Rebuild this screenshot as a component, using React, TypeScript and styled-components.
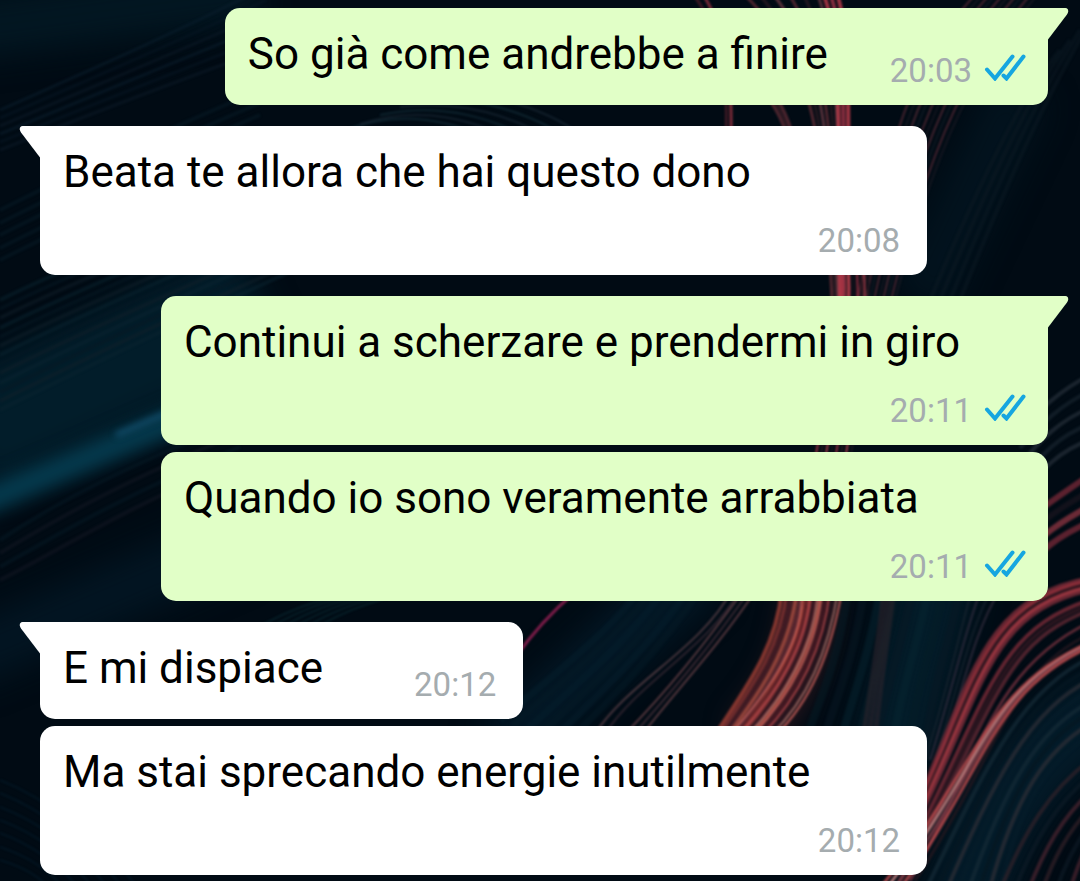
import React from "react";
import styled, { createGlobalStyle } from "styled-components";

const GlobalStyle = createGlobalStyle`
  *, *::before, *::after { box-sizing: border-box; }
  body {
    margin: 0;
    background: #010b14;
    font-family: Roboto, "Noto Sans", sans-serif;
  }
`;

/* ---------- Wallpaper ---------- */

type Curve = [number, number, number, number, number, number, number, number];

interface Bundle {
  from: Curve;
  to: Curve;
  count: number;
  colors: string[];
  width: number;
  opacity: number;
}

const bundles: Bundle[] = [
  // faint teal threads, left side
  { from: [0, 110, 90, 70, 160, 40, 260, -10], to: [0, 150, 100, 110, 180, 80, 290, 40], count: 6, colors: ["#0b2030", "#071825", "#0e1c29"], width: 3, opacity: 0.5 },
  { from: [0, 210, 60, 180, 120, 150, 260, 90], to: [0, 260, 60, 230, 120, 200, 260, 140], count: 5, colors: ["#071c28"], width: 4, opacity: 0.5 },
  { from: [0, 300, 60, 270, 160, 230, 360, 150], to: [0, 410, 60, 380, 160, 330, 360, 240], count: 13, colors: ["#0a2430", "#051824", "#101f29"], width: 4, opacity: 0.5 },
  { from: [0, 540, 60, 500, 120, 470, 240, 420], to: [0, 580, 60, 550, 120, 510, 240, 460], count: 4, colors: ["#061a26", "#141824"], width: 4, opacity: 0.5 },
  { from: [0, 780, 50, 800, 100, 840, 140, 890], to: [0, 860, 20, 866, 40, 876, 50, 890], count: 7, colors: ["#051e2e"], width: 2, opacity: 0.5 },
  { from: [240, 640, 280, 610, 320, 600, 360, 590], to: [300, 640, 330, 615, 370, 600, 420, 590], count: 6, colors: ["#0a2a32"], width: 2, opacity: 0.6 },
  { from: [340, 132, 400, 108, 450, 118, 520, 150], to: [440, 90, 500, 94, 560, 112, 600, 150], count: 6, colors: ["#122c38", "#182633"], width: 2, opacity: 0.7 },
  // deep blue streaks between the lower bubbles
  { from: [500, 720, 560, 670, 610, 630, 640, 590], to: [560, 750, 610, 700, 660, 650, 700, 590], count: 6, colors: ["#041e2c", "#041a25"], width: 7, opacity: 0.5 },
  { from: [805, 740, 825, 690, 840, 650, 848, 590], to: [925, 760, 930, 690, 950, 640, 960, 590], count: 8, colors: ["#041b26", "#081723", "#052430"], width: 8, opacity: 0.5 },
  { from: [862, 745, 870, 690, 878, 650, 884, 590], to: [874, 745, 880, 690, 886, 650, 894, 590], count: 3, colors: ["#33252e"], width: 5, opacity: 0.5 },
  // thin copper threads
  { from: [594, 735, 630, 680, 700, 650, 732, 590], to: [604, 735, 640, 680, 706, 650, 740, 590], count: 2, colors: ["#63444c", "#3c2b36"], width: 2, opacity: 0.7 },
  { from: [624, 735, 668, 690, 700, 650, 744, 590], to: [642, 735, 672, 695, 716, 650, 756, 590], count: 3, colors: ["#75494f", "#4a323c"], width: 2, opacity: 0.7 },
  // upper red strands
  { from: [690, -10, 722, 30, 728, 80, 726, 135], to: [700, -10, 728, 30, 732, 80, 731, 135], count: 2, colors: ["#4c1c28", "#a23644"], width: 3, opacity: 0.75 },
  { from: [740, 60, 765, 95, 780, 108, 788, 140], to: [752, 60, 775, 95, 786, 108, 794, 140], count: 3, colors: ["#6d303a", "#3c2028"], width: 3, opacity: 0.7 },
  { from: [740, -10, 800, 50, 822, 90, 832, 300], to: [816, -10, 836, 40, 836, 90, 846, 300], count: 6, colors: ["#6f3039", "#2f1c24", "#79404a"], width: 3, opacity: 0.7 },
  { from: [822, -10, 842, 40, 838, 90, 840, 300], to: [836, -10, 852, 40, 848, 90, 848, 300], count: 3, colors: ["#c23d4c", "#a63648"], width: 4, opacity: 0.8 },
  { from: [980, -10, 930, 40, 890, 110, 858, 300], to: [1050, -20, 1000, 40, 950, 90, 895, 300], count: 10, colors: ["#6d303e", "#1f1c26", "#6a3440", "#16202a"], width: 2, opacity: 0.6 },
  { from: [1060, 50, 1040, 75, 1010, 110, 930, 300], to: [1090, 20, 1070, 60, 1040, 100, 960, 300], count: 4, colors: ["#0b1a24"], width: 4, opacity: 0.5 },
  { from: [842, 270, 846, 340, 825, 400, 815, 460], to: [868, 270, 872, 340, 860, 400, 850, 460], count: 8, colors: ["#b03547", "#2f1a22", "#c04450", "#1c161e"], width: 2, opacity: 0.8 },
  // central flame
  { from: [782, 590, 776, 650, 744, 690, 715, 735], to: [822, 590, 812, 650, 784, 700, 750, 735], count: 9, colors: ["#d2503f", "#a83d3b", "#5a222c", "#d8604e", "#70303a"], width: 4, opacity: 0.6 },
  { from: [802, 590, 804, 640, 770, 690, 730, 735], to: [842, 590, 832, 650, 812, 700, 776, 735], count: 11, colors: ["#c8605a", "#4a1824", "#b0444a", "#26141e", "#a06a64"], width: 2, opacity: 0.85 },
  // outer arcs, right edge
  { from: [1020, 430, 1040, 410, 1060, 390, 1090, 375], to: [1020, 500, 1040, 470, 1060, 450, 1090, 440], count: 5, colors: ["#202a34", "#14212b"], width: 4, opacity: 0.8 },
  { from: [1020, 525, 1045, 505, 1060, 495, 1090, 475], to: [1020, 575, 1040, 550, 1060, 535, 1090, 522], count: 4, colors: ["#7a2a38", "#18141d", "#8f3542"], width: 6, opacity: 0.75 },
  { from: [925, 760, 950, 680, 960, 630, 972, 590], to: [940, 760, 965, 680, 975, 630, 1000, 590], count: 4, colors: ["#1c2834", "#43364a"], width: 2, opacity: 0.6 },
  { from: [900, 840, 970, 700, 970, 600, 1090, 578], to: [900, 856, 985, 700, 980, 615, 1090, 590], count: 5, colors: ["#7c2c38", "#a53440", "#30161f", "#b83e49"], width: 4, opacity: 0.8 },
  { from: [900, 868, 990, 700, 992, 632, 1090, 600], to: [900, 881, 1000, 700, 1000, 645, 1090, 610], count: 3, colors: ["#8a2f3c", "#3a1a24", "#6d2c38"], width: 4, opacity: 0.7 },
  { from: [910, 881, 980, 760, 990, 670, 1090, 622], to: [915, 881, 1000, 750, 1010, 670, 1090, 634], count: 2, colors: ["#70303c", "#24181f"], width: 3, opacity: 0.8 },
  { from: [870, 900, 980, 770, 980, 690, 1090, 642], to: [892, 900, 988, 770, 990, 692, 1090, 647], count: 4, colors: ["#b84a4c", "#c88482", "#7a3c46"], width: 3, opacity: 0.85 },
  { from: [925, 891, 985, 770, 1020, 690, 1090, 658], to: [1000, 891, 1020, 800, 1050, 760, 1090, 735], count: 8, colors: ["#142a35", "#061722", "#2c2e36", "#051c2a"], width: 4, opacity: 0.75 },
  { from: [1000, 891, 1025, 830, 1050, 790, 1090, 760], to: [1070, 891, 1074, 875, 1080, 860, 1090, 840], count: 6, colors: ["#3c242c", "#0f1d28", "#5a2a36"], width: 4, opacity: 0.6 },
];

const strands = bundles.flatMap((bundle, b) =>
  Array.from({ length: bundle.count }, (_, i) => {
    const t = i / (bundle.count - 1);
    const p = bundle.from.map((v, k) => Math.round(v + (bundle.to[k] - v) * t));
    return {
      key: `${b}-${i}`,
      d: `M${p[0]} ${p[1]}C${p[2]} ${p[3]} ${p[4]} ${p[5]} ${p[6]} ${p[7]}`,
      color: bundle.colors[i % bundle.colors.length],
      width: bundle.width,
      opacity: bundle.opacity,
    };
  })
);

const WallpaperSvg = styled.svg`
  position: fixed;
  inset: 0;
  z-index: -1;
  width: 100%;
  height: 100%;
`;

const Wallpaper = () => (
  <WallpaperSvg viewBox="0 0 1080 881" preserveAspectRatio="xMidYMid slice" aria-hidden="true">
    <defs>
      <filter id="haze" filterUnits="userSpaceOnUse" x="-100" y="-100" width="1280" height="1081" colorInterpolationFilters="sRGB">
        <feGaussianBlur stdDeviation="16" />
      </filter>
      <filter id="glow" filterUnits="userSpaceOnUse" x="-100" y="300" width="500" height="300" colorInterpolationFilters="sRGB">
        <feGaussianBlur stdDeviation="9" />
      </filter>
      <filter id="glint" filterUnits="userSpaceOnUse" x="0" y="350" width="300" height="150" colorInterpolationFilters="sRGB">
        <feGaussianBlur stdDeviation="3" />
      </filter>
      <filter id="soft" filterUnits="userSpaceOnUse" x="-20" y="-20" width="1120" height="921" colorInterpolationFilters="sRGB">
        <feGaussianBlur stdDeviation="1" />
      </filter>
    </defs>
    <rect width="1080" height="881" fill="#010b14" />
    <g filter="url(#haze)" fill="none">
      <path d="M-40 30L260 -10" stroke="#021722" strokeWidth="60" />
      <path d="M-40 440L260 300" stroke="#021d2a" strokeWidth="120" />
      <path d="M-40 660L240 540" stroke="#021522" strokeWidth="60" />
      <path d="M500 750L700 570" stroke="#031826" strokeWidth="60" />
      <path d="M890 760L940 570" stroke="#031c29" strokeWidth="80" />
      <path d="M960 920Q1000 760 1120 700" stroke="#031b29" strokeWidth="80" />
      <path d="M920 300L1020 90" stroke="#02131e" strokeWidth="60" />
      <path d="M812 570Q815 670 745 740" stroke="#5a2226" strokeWidth="30" />
    </g>
    <path d="M-40 512L200 410" stroke="#053c50" strokeWidth="26" filter="url(#glow)" />
    <g filter="url(#soft)" fill="none">
      {strands.map((s) => (
        <path key={s.key} d={s.d} stroke={s.color} strokeWidth={s.width} opacity={s.opacity} />
      ))}
      <path d="M515 658Q540 622 575 592" stroke="#7a1c48" strokeWidth="3" />
    </g>
    <path d="M116 435L190 403" stroke="#124e6c" strokeWidth="5" filter="url(#glint)" />
  </WallpaperSvg>
);

/* ---------- Conversation ---------- */

const Conversation = styled.main`
  display: flex;
  flex-direction: column;
  gap: 21px;
  min-height: 100vh;
  padding: 8px 32px 6px 40px;
`;

const MessageGroup = styled.section<{ $mine: boolean }>`
  display: flex;
  flex-direction: column;
  align-items: ${(p) => (p.$mine ? "flex-end" : "flex-start")};
  gap: 7px;
`;

const Bubble = styled.article<{ $mine: boolean; $first: boolean }>`
  position: relative;
  display: flex;
  flex-wrap: wrap;
  align-items: flex-end;
  gap: 13px ${(p) => (p.$mine ? 62 : 91)}px;
  max-width: 88%;
  padding: 20px ${(p) => (p.$mine ? 22 : 27)}px 15px 23px;
  border-radius: 15px;
  ${(p) => p.$first && (p.$mine ? "border-top-right-radius: 0;" : "border-top-left-radius: 0;")}
  background: ${(p) => (p.$mine ? "#e1ffc7" : "#ffffff")};
`;

const TailSvg = styled.svg<{ $mine: boolean }>`
  position: absolute;
  top: 0;
  ${(p) => (p.$mine ? "left: 100%;" : "right: 100%; transform: scaleX(-1);")}
  fill: ${(p) => (p.$mine ? "#e1ffc7" : "#ffffff")};
`;

const Text = styled.p`
  margin: 0;
  padding-bottom: 10px;
  color: #000000;
  font-size: 44px;
  line-height: 52px;
`;

const Meta = styled.footer`
  display: flex;
  align-items: center;
  gap: 12px;
  margin-left: auto;
  color: #a5acaf;
  font-size: 33px;
  line-height: 39px;
`;

const TicksSvg = styled.svg`
  margin-bottom: 6px;
  fill: none;
  stroke: #16a6e0;
  stroke-width: 4px;
  stroke-linecap: round;
`;

const Tail = ({ mine }: { mine: boolean }) => (
  <TailSvg $mine={mine} width="21" height="32" viewBox="0 0 21 32" aria-hidden="true">
    <path d="M-1 0H17.500Q20.500 0.500 20.200 3.500Q20 5 19 6.500L0 31.500H-1Z" />
  </TailSvg>
);

const ReadTicks = () => (
  <TicksSvg width="42" height="27" viewBox="0 0 42 27" role="img" aria-label="Letto">
    <path d="M3 15.500L11 24.500L28.500 2.500" />
    <path d="M19.500 21.500L22.500 24.500L39.500 2.500" />
  </TicksSvg>
);

interface Message {
  text: string;
  time: string;
}

const groups: { mine: boolean; messages: Message[] }[] = [
  { mine: true, messages: [{ text: "So già come andrebbe a finire", time: "20:03" }] },
  { mine: false, messages: [{ text: "Beata te allora che hai questo dono", time: "20:08" }] },
  {
    mine: true,
    messages: [
      { text: "Continui a scherzare e prendermi in giro", time: "20:11" },
      { text: "Quando io sono veramente arrabbiata", time: "20:11" },
    ],
  },
  {
    mine: false,
    messages: [
      { text: "E mi dispiace", time: "20:12" },
      { text: "Ma stai sprecando energie inutilmente", time: "20:12" },
    ],
  },
];

export default function App() {
  return (
    <>
      <GlobalStyle />
      <Wallpaper />
      <Conversation lang="it">
        {groups.map((group, g) => (
          <MessageGroup key={g} $mine={group.mine}>
            {group.messages.map((message, i) => (
              <Bubble key={message.text} $mine={group.mine} $first={i === 0}>
                {i === 0 && <Tail mine={group.mine} />}
                <Text>{message.text}</Text>
                <Meta>
                  <time>{message.time}</time>
                  {group.mine && <ReadTicks />}
                </Meta>
              </Bubble>
            ))}
          </MessageGroup>
        ))}
      </Conversation>
    </>
  );
}
